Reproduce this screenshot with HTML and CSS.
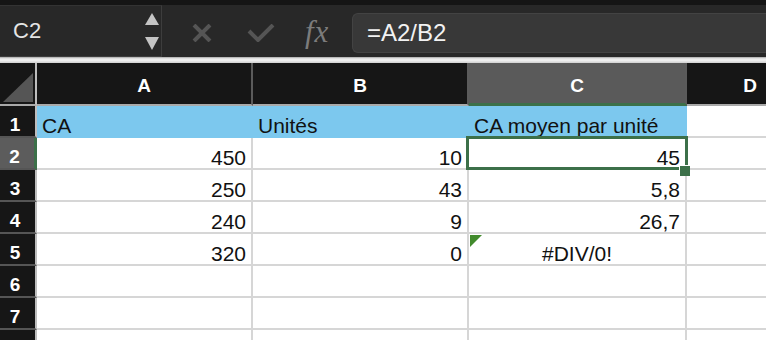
FILE: index.html
```html
<!DOCTYPE html>
<html>
<head>
	<title>Classeur</title>
	<link rel="stylesheet" href="styles.css">
</head>
<body>

	<div class="toolbar">
		<div class="namebox">
			<span class="ref">C2</span>
			<svg class="spin" width="14" height="38" viewBox="0 0 14 38">
				<polygon points="7,0 14,12 0,12" fill="#c4c4c4"/>
				<polygon points="0,24 14,24 7,37" fill="#c4c4c4"/>
			</svg>
		</div>
		<div class="tools">
			<svg class="cancel" width="20" height="18" viewBox="0 0 20 18">
				<path d="M2 1 L18 17 M18 1 L2 17" stroke="#555" stroke-width="4"/>
			</svg>
			<svg class="enter" width="28" height="18" viewBox="0 0 28 18">
				<path d="M2 7 L11 16 L26 1" stroke="#555" stroke-width="4" fill="none"/>
			</svg>
			<span class="fx">fx</span>
		</div>
		<div class="formula">=A2/B2</div>
	</div>
	<div class="divider"></div>

	<div class="sheet">
		<div class="corner"><div class="corner-tri"></div></div>
		<div class="colhead">A</div>
		<div class="colhead">B</div>
		<div class="colhead active">C</div>
		<div class="colhead">D</div>

		<div class="rowhead">1</div>
		<div class="cell fill">CA</div>
		<div class="cell fill">Unités</div>
		<div class="cell fill">CA moyen par unité</div>
		<div class="cell"></div>

		<div class="rowhead active">2</div>
		<div class="cell num">450</div>
		<div class="cell num">10</div>
		<div class="cell num">45</div>
		<div class="cell"></div>

		<div class="rowhead">3</div>
		<div class="cell num">250</div>
		<div class="cell num">43</div>
		<div class="cell num">5,8</div>
		<div class="cell"></div>

		<div class="rowhead">4</div>
		<div class="cell num">240</div>
		<div class="cell num">9</div>
		<div class="cell num">26,7</div>
		<div class="cell"></div>

		<div class="rowhead">5</div>
		<div class="cell num">320</div>
		<div class="cell num">0</div>
		<div class="cell err"><span class="flag"></span>#DIV/0!</div>
		<div class="cell"></div>

		<div class="rowhead">6</div>
		<div class="cell"></div>
		<div class="cell"></div>
		<div class="cell"></div>
		<div class="cell"></div>

		<div class="rowhead">7</div>
		<div class="cell"></div>
		<div class="cell"></div>
		<div class="cell"></div>
		<div class="cell"></div>

		<div class="rowhead"></div>
		<div class="cell"></div>
		<div class="cell"></div>
		<div class="cell"></div>
		<div class="cell"></div>

		<div class="selection"><div class="handle"></div></div>
	</div>

</body>
</html>
```

FILE: styles.css
```css
body{
	margin: 0;
	width: 766px;
	height: 340px;
	overflow: hidden;
	background: #fff;
	font-family: "Liberation Sans", Arial, sans-serif;
}

/* barre de formule */
.toolbar{
	display: flex;
	height: 52px;
	border-top: 5px solid #151515;
	background: #282828;
}
.namebox{
	display: flex;
	align-items: center;
	justify-content: space-between;
	box-sizing: border-box;
	width: 162px;
	height: 52px;
	padding: 0 2px 0 13px;
	border-top: 1px solid #333;
	border-right: 1px solid #3d3d3d;
	border-bottom: 1px solid #3d3d3d;
	color: #e4e4e4;
	font-size: 22px;
}
.spin{
	margin-top: 1px;
}
.tools{
	display: flex;
	align-items: center;
	width: 190px;
	padding-left: 30px;
	box-sizing: border-box;
}
.cancel{
	margin-top: 4px;
}
.enter{
	margin-left: 35px;
	margin-top: 4px;
}
.fx{
	margin-left: 30px;
	margin-top: 2px;
	font-family: "Liberation Serif", "DejaVu Serif", serif;
	font-style: italic;
	font-size: 31px;
	color: #7c7c7c;
	letter-spacing: 1px;
}
.formula{
	flex: 1;
	height: 40px;
	margin-top: 8px;
	box-sizing: border-box;
	padding-left: 14px;
	border: 1px solid #434343;
	border-right: none;
	border-radius: 6px 0 0 6px;
	background: #383838;
	color: #f2f2f2;
	font-size: 24px;
	line-height: 38px;
}
.divider{
	height: 6px;
	background: linear-gradient(#9a9a9a 0, #d8d8d8 1px, #f4f4f4 3px, #d0d0d0 6px);
}

/* grille */
.sheet{
	position: relative;
	display: grid;
	grid-template-columns: 37px 216px 216px 218px 128px;
	grid-template-rows: 43px repeat(7, 32px) 32px;
}
.corner, .colhead, .rowhead, .cell{
	box-sizing: border-box;
	border-right: 2px solid #d6d6d6;
	border-bottom: 2px solid #d6d6d6;
}
.corner{
	position: relative;
	background: #161616;
	border-right-color: #bdbdbd;
	border-bottom-color: #a9a9a9;
}
.corner-tri{
	position: absolute;
	left: 3px;
	bottom: 2px;
	width: 0;
	height: 0;
	border-left: 30px solid transparent;
	border-bottom: 29px solid #555;
}
.colhead{
	display: flex;
	align-items: flex-end;
	justify-content: center;
	padding-bottom: 8px;
	background: #161616;
	border-right-color: #5b5b5b;
	border-bottom-color: #a9a9a9;
	color: #fff;
	font-weight: bold;
	font-size: 19px;
	line-height: 20px;
}
.colhead.active{
	background: #5a5a5a;
	border-bottom: 3px solid #3c7049;
	padding-bottom: 7px;
}
.rowhead{
	display: flex;
	align-items: flex-end;
	justify-content: center;
	padding-right: 5px;
	padding-bottom: 1px;
	background: #161616;
	border-right-color: #bdbdbd;
	border-bottom-color: #555;
	color: #fff;
	font-weight: bold;
	font-size: 19px;
	line-height: 20px;
}
.rowhead.active{
	background: #5c5c5c;
	border-right: 3px solid #3c7049;
}
.cell{
	display: flex;
	align-items: flex-end;
	padding: 0 5px;
	color: #111;
	font-size: 21px;
	line-height: 20px;
	white-space: nowrap;
}
.cell.fill{
	background: #7cc8ee;
	border-color: #7cc8ee;
}
.cell.num{
	justify-content: flex-end;
}
.cell.err{
	position: relative;
	justify-content: center;
}
.flag{
	position: absolute;
	left: 1px;
	top: 1px;
	width: 0;
	height: 0;
	border-top: 12px solid #418a2c;
	border-right: 12px solid transparent;
}

/* cellule active */
.selection{
	position: absolute;
	left: 466px;
	top: 73px;
	width: 222px;
	height: 34px;
	box-sizing: border-box;
	border: 3px solid #3c7049;
}
.handle{
	position: absolute;
	right: -5px;
	bottom: -9px;
	width: 10px;
	height: 10px;
	background: #3c7049;
	box-shadow: -1px -1px 0 #fff;
}
```
